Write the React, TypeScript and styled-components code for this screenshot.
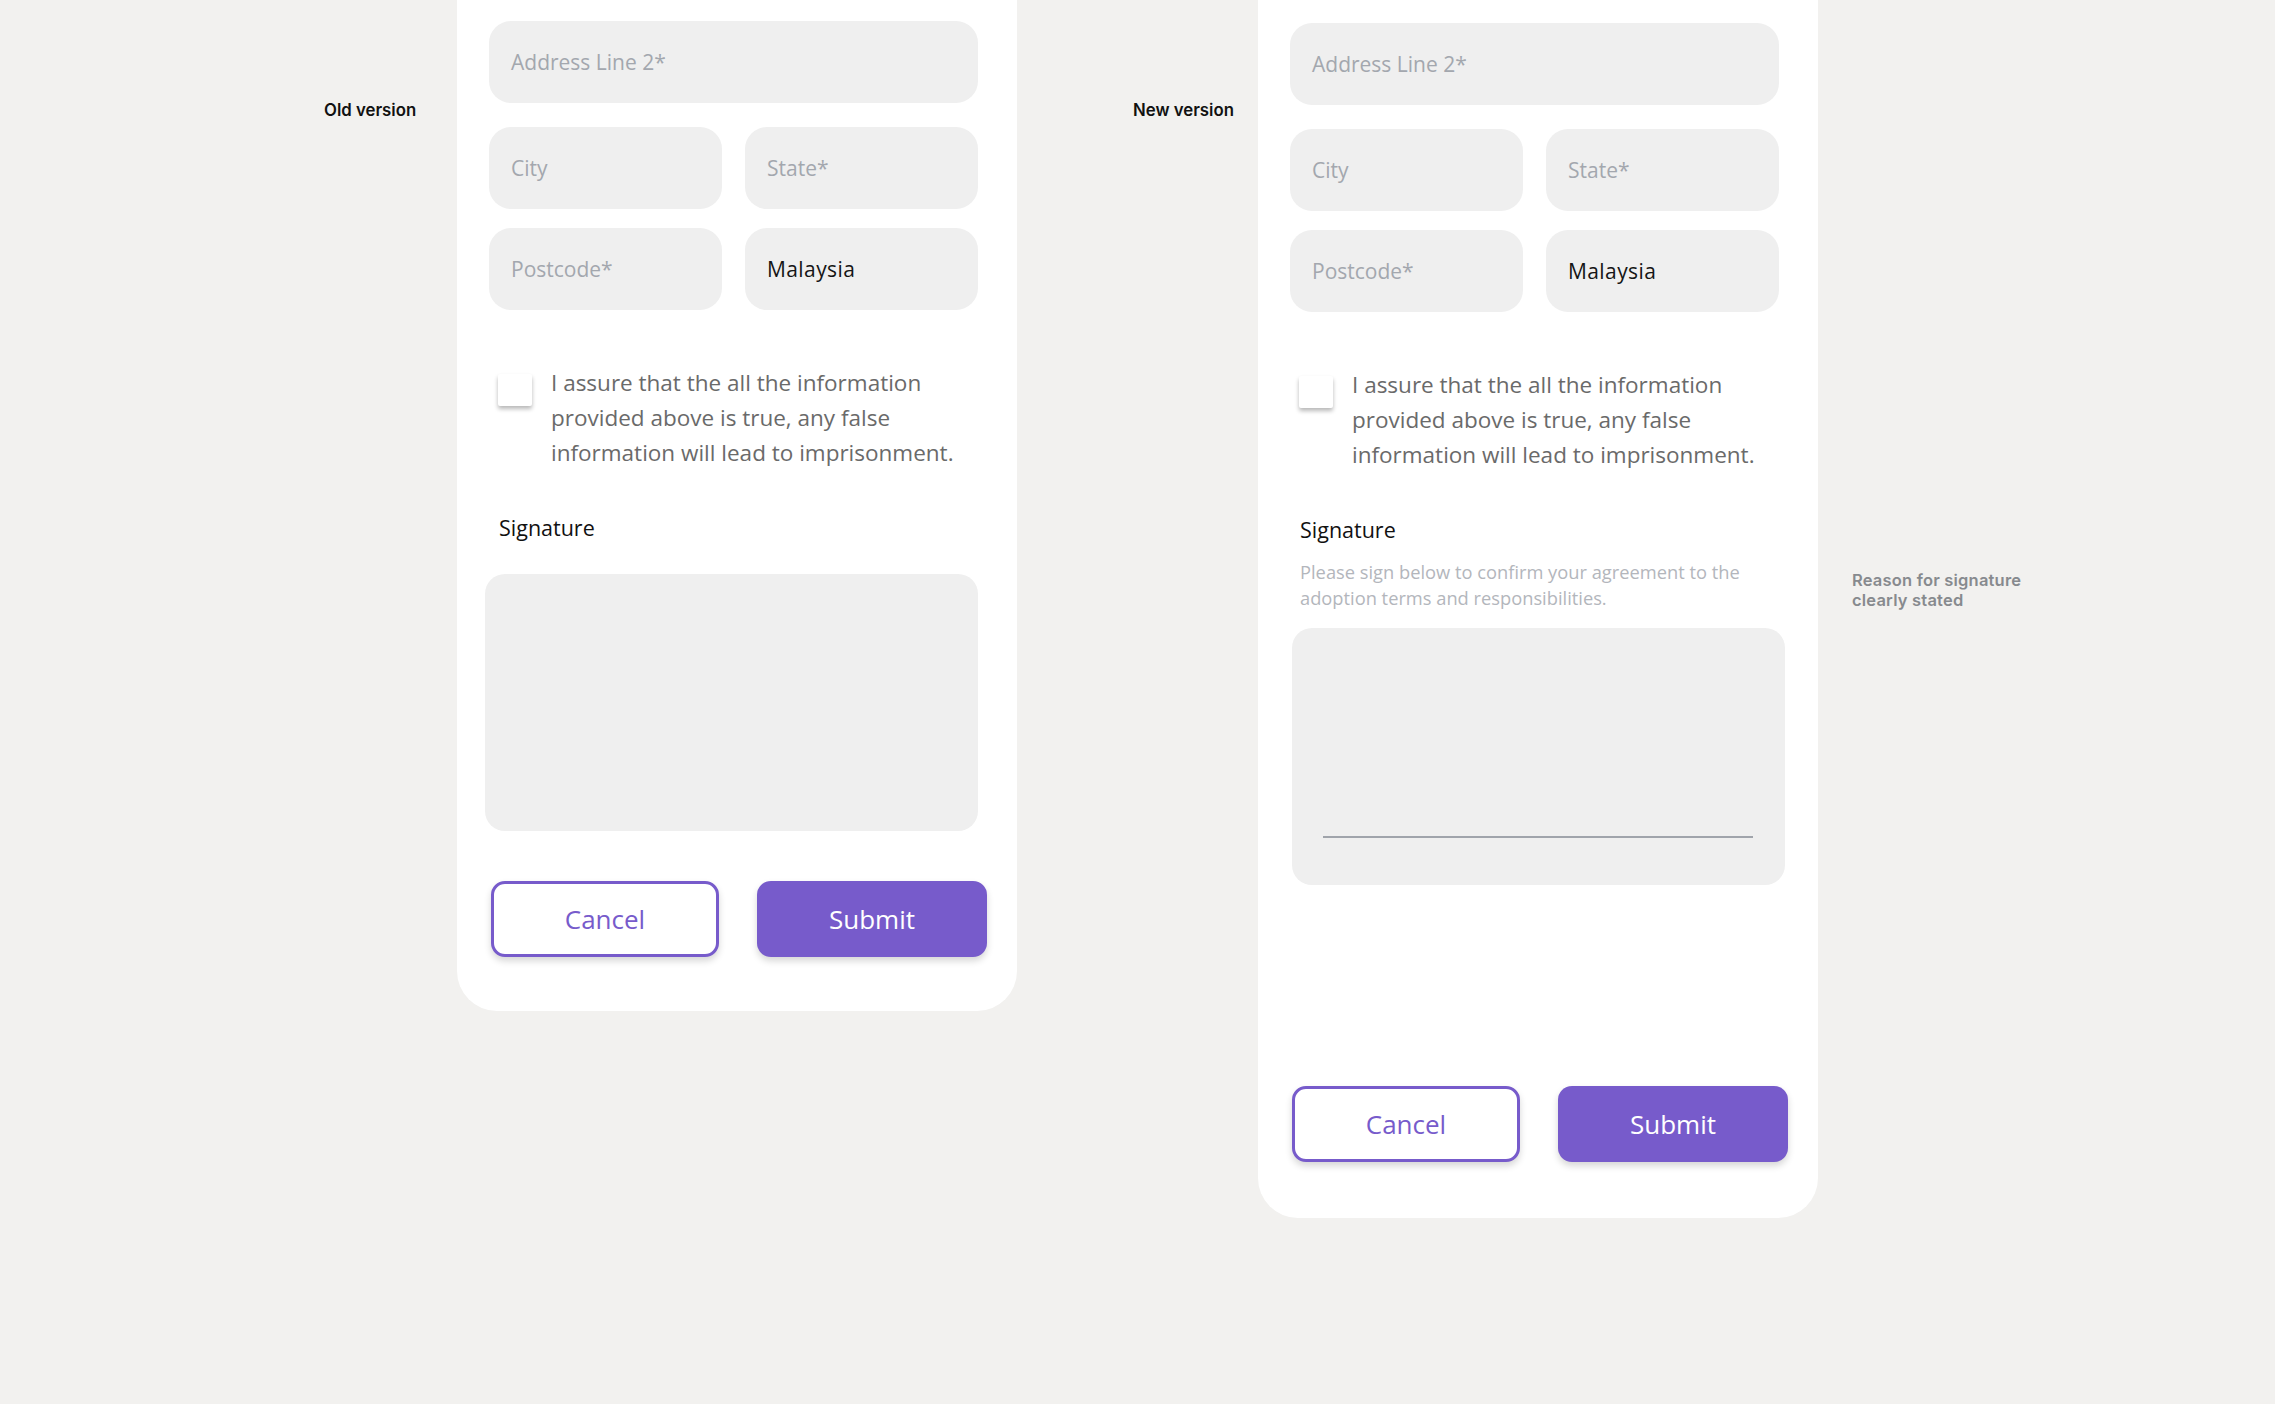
import React from "react";
import styled, { createGlobalStyle } from "styled-components";

const GlobalStyle = createGlobalStyle`
  html, body {
    margin: 0;
    padding: 0;
    background: #f2f1ef;
  }
  * {
    box-sizing: border-box;
  }
`;

const FormCard = ({ isNew }: { isNew: boolean }) => {
  return (
    <Card $top={isNew ? 23 : 21} $bottom={isNew ? 56 : 54}>
      <WideField>
        <FieldText>Address Line 2*</FieldText>
      </WideField>
      <FieldRow $bottom={19}>
        <Field>
          <FieldText>City</FieldText>
        </Field>
        <Field>
          <FieldText>State*</FieldText>
        </Field>
      </FieldRow>
      <FieldRow $bottom={0}>
        <Field>
          <FieldText>Postcode*</FieldText>
        </Field>
        <Field>
          <FieldText $filled>Malaysia</FieldText>
        </Field>
      </FieldRow>

      <AgreeRow>
        <CheckBox />
        <AgreeText>
          I assure that the all the information provided above is true, any
          false information will lead to imprisonment.
        </AgreeText>
      </AgreeRow>

      <SignatureLabel>Signature</SignatureLabel>
      {isNew && (
        <SignatureHint>
          Please sign below to confirm your agreement to the adoption terms and
          responsibilities.
        </SignatureHint>
      )}
      <SignatureBox $shift={isNew ? 2 : -4} $top={isNew ? 17 : 32}>
        {isNew && <SignLine />}
      </SignatureBox>

      <ButtonRow $top={isNew ? 201 : 50}>
        <CancelButton>Cancel</CancelButton>
        <SubmitButton>Submit</SubmitButton>
      </ButtonRow>
    </Card>
  );
};

const App = () => {
  return (
    <>
      <GlobalStyle />
      <Page>
        <VersionLabel $width={133}>Old version</VersionLabel>
        <FormCard isNew={false} />
        <VersionLabel $width={125} $left={116}>
          New version
        </VersionLabel>
        <FormCard isNew />
        <Note>
          Reason for signature
          <br />
          clearly stated
        </Note>
      </Page>
    </>
  );
};

const Page = styled.div`
  display: flex;
  align-items: flex-start;
  min-height: 1404px;
  padding-left: 324px;
  background: #f2f1ef;
  font-family: "Open Sans", sans-serif;
`;

const VersionLabel = styled.div<{ $width: number; $left?: number }>`
  width: ${(p) => p.$width}px;
  margin-left: ${(p) => p.$left ?? 0}px;
  margin-top: 100px;
  font-family: "Inter", sans-serif;
  font-size: 16.8px;
  font-weight: 600;
  line-height: 20px;
  color: #111;
  white-space: nowrap;
`;

const Note = styled.div`
  margin-left: 34px;
  margin-top: 570px;
  font-family: "Inter", sans-serif;
  font-size: 16.5px;
  font-weight: 600;
  letter-spacing: 0.2px;
  line-height: 20px;
  color: #878a8e;
  white-space: nowrap;
`;

const Card = styled.div<{ $top: number; $bottom: number }>`
  width: 560px;
  background: #fff;
  border-radius: 0 0 40px 40px;
  padding: ${(p) => p.$top}px 39px ${(p) => p.$bottom}px 32px;
  display: flex;
  flex-direction: column;
`;

const Field = styled.div`
  height: 82px;
  border-radius: 22px;
  background: #efefef;
  display: flex;
  align-items: center;
  padding-left: 22px;
`;

const WideField = styled(Field)`
  margin-bottom: 24px;
`;

const FieldRow = styled.div<{ $bottom: number }>`
  display: grid;
  grid-template-columns: 233px 233px;
  gap: 23px;
  margin-bottom: ${(p) => p.$bottom}px;
`;

const FieldText = styled.span<{ $filled?: boolean }>`
  font-size: 21px;
  color: ${(p) => (p.$filled ? "#151515" : "#a3a7ae")};
  font-weight: ${(p) => (p.$filled ? 500 : 400)};
  letter-spacing: ${(p) => (p.$filled ? "0.4px" : "0")};
`;

const AgreeRow = styled.div`
  display: flex;
  align-items: flex-start;
  gap: 19px;
  margin-top: 55px;
  padding-left: 9px;
`;

const CheckBox = styled.div`
  flex: none;
  width: 34px;
  height: 32px;
  margin-top: 9px;
  border-radius: 2px;
  background: #fff;
  box-shadow: 0 3px 4px rgba(0, 0, 0, 0.28);
`;

const AgreeText = styled.p`
  margin: 0;
  width: 420px;
  font-size: 22.5px;
  line-height: 35px;
  color: #6a6a6a;
`;

const SignatureLabel = styled.div`
  margin-top: 44px;
  padding-left: 10px;
  font-size: 21.5px;
  line-height: 28px;
  color: #111;
`;

const SignatureHint = styled.p`
  margin: 15px 0 0;
  padding-left: 10px;
  width: 480px;
  font-size: 18.3px;
  line-height: 26px;
  color: #b3b6bc;
`;

const SignatureBox = styled.div<{ $shift: number; $top: number }>`
  position: relative;
  width: 493px;
  height: 257px;
  margin-top: ${(p) => p.$top}px;
  margin-left: ${(p) => p.$shift}px;
  border-radius: 20px;
  background: #efefef;
`;

const SignLine = styled.div`
  position: absolute;
  left: 31px;
  right: 32px;
  bottom: 47px;
  height: 2px;
  background: #a0a4ab;
`;

const ButtonRow = styled.div<{ $top: number }>`
  display: grid;
  grid-template-columns: 228px 230px;
  gap: 38px;
  margin-top: ${(p) => p.$top}px;
  margin-left: 2px;
`;

const BaseButton = styled.button`
  height: 76px;
  border-radius: 14px;
  font-family: "Open Sans", sans-serif;
  font-size: 26px;
  font-weight: 500;
  cursor: pointer;
  box-shadow: 0 4px 7px rgba(0, 0, 0, 0.16);
`;

const CancelButton = styled(BaseButton)`
  background: #fff;
  border: 3px solid #775bcb;
  color: #775bcb;
`;

const SubmitButton = styled(BaseButton)`
  background: #775bcb;
  border: none;
  color: #fff;
`;

export default App;
